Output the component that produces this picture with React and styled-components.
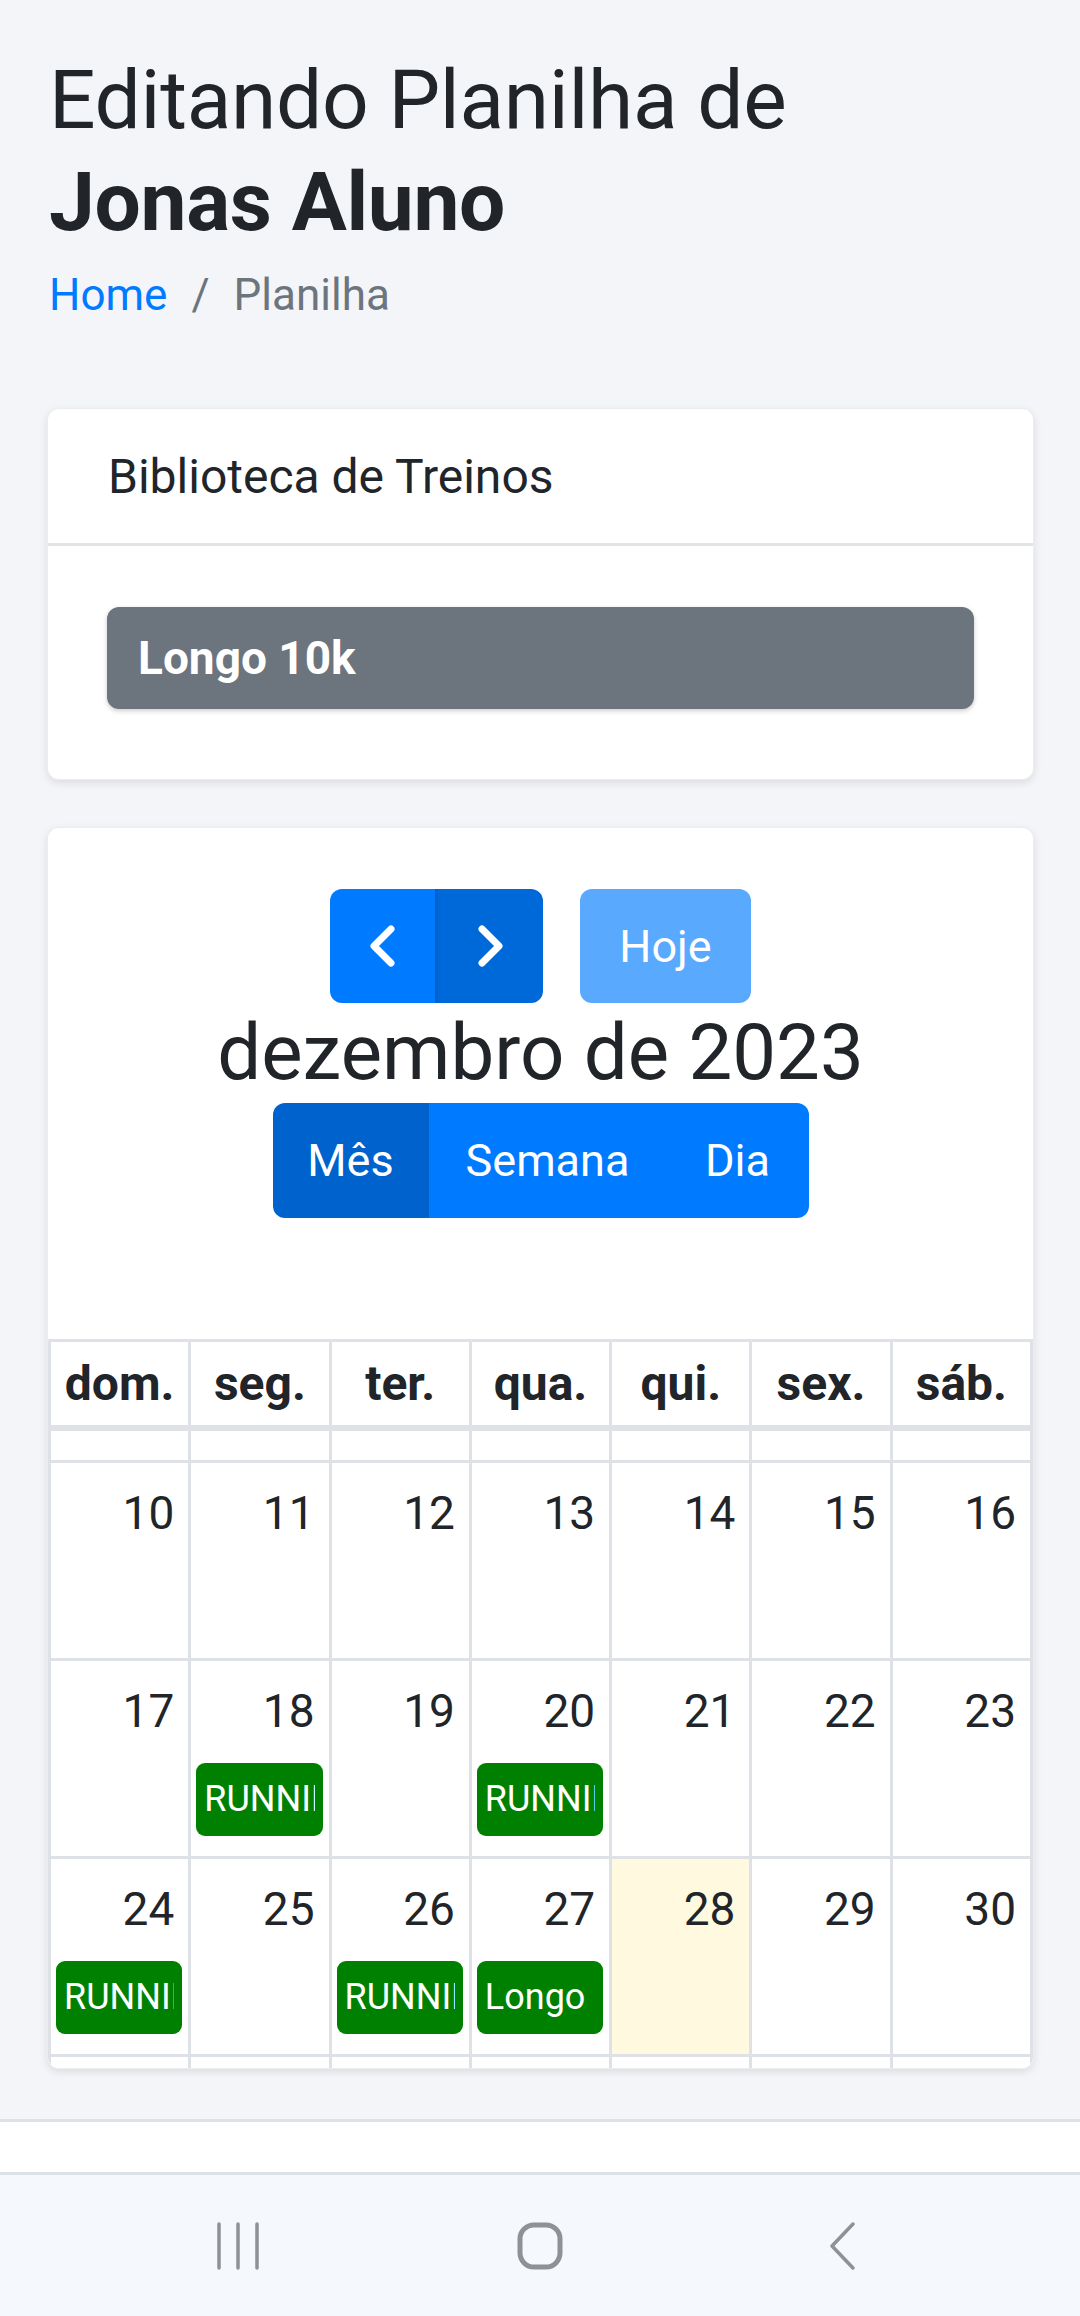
import styled, {createGlobalStyle} from 'styled-components';

const GlobalStyle = createGlobalStyle`
    html, body {
        margin: 0;
        padding: 0;
        background: #f4f5f9;
    }
    body {
        font-family: Roboto, "Noto Sans", sans-serif;
        color: #212529;
    }
    * {
        box-sizing: border-box;
    }
`

const Screen = styled.div`
    width: 1080px;
    min-height: 2316px;
    display: flex;
    flex-direction: column;
    background: #f4f5f9;
`

const Main = styled.main`
    flex: 1;
    padding: 49px 46px 40px 47px;
`

const Title = styled.h2`
    margin: 0 0 0 2px;
    font-size: 82px;
    line-height: 102px;
    font-weight: 400;
    letter-spacing: -0.3px;
    & > strong {
        display: block;
        font-weight: 700;
    }
`

const Crumbs = styled.nav`
    margin: 6px 0 77px 2px;
    display: flex;
    align-items: center;
    font-size: 44px;
    line-height: 72px;
    color: #6c757d;
`

const CrumbLink = styled.a`
    color: #007bff;
    text-decoration: none;
`

const CrumbSep = styled.span`
    padding: 0 24px;
`

const Card = styled.section`
    background: #fff;
    border: 1px solid rgba(0, 0, 0, 0.07);
    border-radius: 12px;
    box-shadow: 0 3px 8px rgba(0, 0, 0, 0.1);
    overflow: hidden;
    & + & {
        margin-top: 47px;
    }
`

const CardHeader = styled.div`
    height: 137px;
    padding: 0 60px;
    display: flex;
    align-items: center;
    font-size: 48px;
    border-bottom: 3px solid #e2e3e5;
`

const CardBody = styled.div`
    padding: 61px 59px 70px;
`

const LibraryItem = styled.div`
    height: 102px;
    padding-left: 31px;
    display: flex;
    align-items: center;
    background: #6c757d;
    border-radius: 12px;
    box-shadow: 0 2px 5px rgba(0, 0, 0, 0.2);
    color: #fff;
    font-size: 46px;
    font-weight: 700;
`

const Toolbar = styled.div`
    padding-top: 61px;
    margin-bottom: 121px;
    display: flex;
    flex-direction: column;
    align-items: center;
`

const ToolRow = styled.div`
    display: flex;
    gap: 37px;
`

const Group = styled.div`
    display: flex;
    border-radius: 12px;
    overflow: hidden;
`

const Btn = styled.button`
    width: ${({w}) => w}px;
    height: ${({h}) => h || 114}px;
    padding: 0;
    border: none;
    display: flex;
    align-items: center;
    justify-content: center;
    background: ${({tone}) => tone === 'dark' ? '#0069d9' : tone === 'active' ? '#0062cc' : tone === 'faded' ? '#59a9ff' : '#007bff'};
    border-left: ${({divided}) => divided ? '3px solid #0062cc' : 'none'};
    border-radius: ${({round}) => round ? '12px' : '0'};
    color: #fff;
    font-family: Roboto, sans-serif;
    font-size: 45px;
`

const MonthTitle = styled.h2`
    margin: 0;
    font-size: 78px;
    line-height: 100px;
    font-weight: 400;
`

const HeadRow = styled.div`
    display: grid;
    grid-template-columns: repeat(7, 1fr);
    border-top: 3px solid #dee2e6;
    border-bottom: 6px solid #dee2e6;
    border-left: 3px solid #dee2e6;
`

const HeadCell = styled.div`
    height: 83px;
    display: flex;
    align-items: center;
    justify-content: center;
    border-right: 3px solid #dee2e6;
    font-size: 48px;
    font-weight: 700;
`

const Body = styled.div`
    height: 637px;
    display: flex;
    flex-direction: column;
    overflow: hidden;
`

const Week = styled.div`
    flex: none;
    height: ${({h}) => h}px;
    display: grid;
    grid-template-columns: repeat(7, 1fr);
    border-bottom: 3px solid #dee2e6;
    border-left: 3px solid #dee2e6;
`

const Day = styled.div`
    min-width: 0;
    border-right: 3px solid #dee2e6;
    background: ${({today}) => today ? '#fffadf' : '#fff'};
`

const DayNumber = styled.div`
    padding: 16px 14px 0 0;
    text-align: right;
    font-size: 46px;
    line-height: 69px;
`

const EventChip = styled.div`
    margin: 17px 6px 0 5px;
    height: 73px;
    padding: 0 8px;
    background: #008000;
    border-radius: 9px;
    color: #fff;
    font-size: 36px;
    line-height: 73px;
`

const EventTitle = styled.div`
    white-space: nowrap;
    overflow: hidden;
`

const Footer = styled.div`
    height: 56px;
    background: #fff;
    border-top: 3px solid #dee2e6;
    border-bottom: 3px solid #dce2e6;
`

const SystemBar = styled.div`
    height: 141px;
    display: grid;
    grid-template-columns: repeat(3, 302px);
    justify-content: center;
    align-items: center;
    justify-items: center;
    background: #f5f8fc;
`

const weekDays = ['dom.', 'seg.', 'ter.', 'qua.', 'qui.', 'sex.', 'sáb.'];

// visible weeks of the scrolled month grid
const weeks = [
    [10, 11, 12, 13, 14, 15, 16],
    [17, 18, 19, 20, 21, 22, 23],
    [24, 25, 26, 27, 28, 29, 30]
];

const events = {
    18: 'RUNNING',
    20: 'RUNNING',
    24: 'RUNNING',
    26: 'RUNNING',
    27: 'Longo 10k'
};

const TODAY = 28;

const Chevron = ({dir}) => (
    <svg width="25" height="42" viewBox="0 0 25 42">
        <polyline
            points={dir === 'left' ? '21,4 4,21 21,38' : '4,4 21,21 4,38'}
            fill="none"
            stroke="#fff"
            strokeWidth="7"
            strokeLinecap="round"
            strokeLinejoin="round"
        />
    </svg>
)

const EmptyWeek = ({h}) => (
    <Week h={h}>
        {weekDays.map(name => <Day key={name} />)}
    </Week>
)

const Calendar = () => (
    <>
        <HeadRow>
            {weekDays.map(name => <HeadCell key={name}>{name}</HeadCell>)}
        </HeadRow>
        <Body>
            <EmptyWeek h={32} />
            {weeks.map((week, index) => (
                <Week key={index} h={198}>
                    {week.map(date => (
                        <Day key={date} today={date === TODAY}>
                            <DayNumber>{date}</DayNumber>
                            {events[date] &&
                                <EventChip>
                                    <EventTitle>{events[date]}</EventTitle>
                                </EventChip>
                            }
                        </Day>
                    ))}
                </Week>
            ))}
            <EmptyWeek h={198} />
        </Body>
    </>
)

export default function App(){
    return <Screen>
        <GlobalStyle />
        <Main>
            <Title>Editando Planilha de <strong>Jonas Aluno</strong></Title>
            <Crumbs>
                <CrumbLink href="#">Home</CrumbLink>
                <CrumbSep>/</CrumbSep>
                <span>Planilha</span>
            </Crumbs>
            <Card>
                <CardHeader>Biblioteca de Treinos</CardHeader>
                <CardBody>
                    <LibraryItem>Longo 10k</LibraryItem>
                </CardBody>
            </Card>
            <Card>
                <Toolbar>
                    <ToolRow>
                        <Group>
                            <Btn w={105}><Chevron dir="left" /></Btn>
                            <Btn w={108} tone="dark" divided><Chevron dir="right" /></Btn>
                        </Group>
                        <Btn w={171} tone="faded" round>Hoje</Btn>
                    </ToolRow>
                    <MonthTitle>dezembro de 2023</MonthTitle>
                    <Group>
                        <Btn w={156} h={115} tone="active">Mês</Btn>
                        <Btn w={238} h={115}>Semana</Btn>
                        <Btn w={142} h={115}>Dia</Btn>
                    </Group>
                </Toolbar>
                <Calendar />
            </Card>
        </Main>
        <Footer />
        <SystemBar>
            <svg width="44" height="50" viewBox="0 0 44 50">
                {[3, 22, 41].map(x => (
                    <line key={x} x1={x} y1="3" x2={x} y2="47" stroke="#8e9196" strokeWidth="3.5" strokeLinecap="round" />
                ))}
            </svg>
            <svg width="46" height="48" viewBox="0 0 46 48">
                <rect x="3" y="3" width="40" height="42" rx="14" fill="none" stroke="#8e9196" strokeWidth="5" />
            </svg>
            <svg width="28" height="50" viewBox="0 0 28 50">
                <polyline points="25,3 4,25 25,47" fill="none" stroke="#8e9196" strokeWidth="3.5" strokeLinecap="round" strokeLinejoin="round" />
            </svg>
        </SystemBar>
    </Screen>
}
